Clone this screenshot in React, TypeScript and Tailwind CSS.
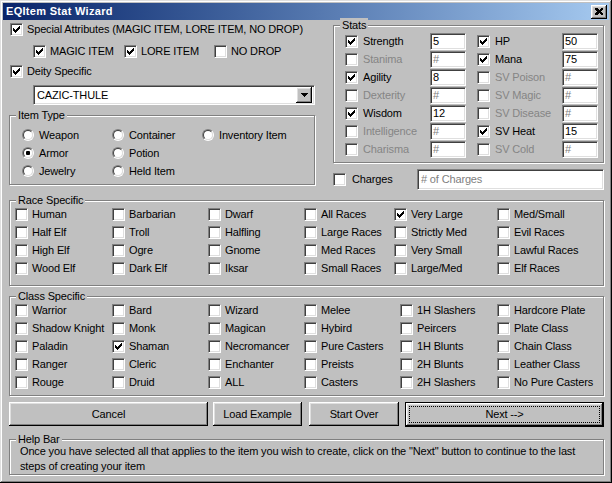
import React from 'react';

// classic win9x bevels
const sunken =
  'border border-t-[#808080] border-l-[#808080] border-r-white border-b-white shadow-[inset_1px_1px_0_#404040,inset_-1px_-1px_0_#dfdfdf]';
const raised =
  'shadow-[inset_-1px_-1px_0_#000,inset_1px_1px_0_#fff,inset_-2px_-2px_0_#808080,inset_2px_2px_0_#dfdfdf]';

const Check = () => (
  <svg width="9" height="9" viewBox="0 0 9 9" shapeRendering="crispEdges">
    <path
      d="M1 3h1v3h-1z M2 4h1v3h-1z M3 5h1v3h-1z M4 4h1v3h-1z M5 3h1v3h-1z M6 2h1v3h-1z M7 1h1v3h-1z"
      fill="#000"
    />
  </svg>
);

const Checkbox = ({ checked = false }: { checked?: boolean }) => (
  <div className={`w-[13px] h-[13px] shrink-0 bg-white flex items-center justify-center ${sunken}`}>
    {checked && <Check />}
  </div>
);

const CheckLabel = ({
  label,
  checked = false,
  disabled = false,
  gap = 'ml-[4px]',
}: {
  label: string;
  checked?: boolean;
  disabled?: boolean;
  gap?: string;
}) => (
  <div className="flex items-center h-[18px] whitespace-nowrap">
    <Checkbox checked={checked} />
    <span className={`${gap} ${disabled ? 'text-[#858585]' : 'text-black'}`}>{label}</span>
  </div>
);

const Radio = ({ label, selected = false }: { label: string; selected?: boolean }) => (
  <div className="flex items-center h-[18px] whitespace-nowrap">
    <div className="w-[12px] h-[12px] shrink-0 rounded-full border border-t-[#808080] border-l-[#808080] border-r-white border-b-white">
      <div className="w-full h-full rounded-full border border-t-[#404040] border-l-[#404040] border-r-[#dfdfdf] border-b-[#dfdfdf] bg-white flex items-center justify-center">
        {selected && <div className="w-[4px] h-[4px] rounded-[1px] bg-black" />}
      </div>
    </div>
    <span className="ml-[5px]">{label}</span>
  </div>
);

const Group = ({
  label,
  className,
  children,
}: {
  label: string;
  className: string;
  children: React.ReactNode;
}) => (
  <div className={`relative border border-[#808080] shadow-[inset_1px_1px_0_#fff,1px_1px_0_#fff] ${className}`}>
    <span className="absolute -top-[8px] left-[6px] px-[2px] bg-[#c0c0c0] leading-[14px]">{label}</span>
    {children}
  </div>
);

const Field = ({ value, placeholder = '#', width }: { value?: string; placeholder?: string; width: string }) => (
  <div className={`${width} h-[17px] shrink-0 bg-white flex items-center pl-[2px] ${sunken}`}>
    {value ? <span>{value}</span> : <span className="text-[#808080]">{placeholder}</span>}
  </div>
);

const stats: [string, boolean, string, string, boolean, string][] = [
  ['Strength', true, '5', 'HP', true, '50'],
  ['Stanima', false, '', 'Mana', true, '75'],
  ['Agility', true, '8', 'SV Poison', false, ''],
  ['Dexterity', false, '', 'SV Magic', false, ''],
  ['Wisdom', true, '12', 'SV Disease', false, ''],
  ['Intelligence', false, '', 'SV Heat', true, '15'],
  ['Charisma', false, '', 'SV Cold', false, ''],
];

const races = [
  ['Human', 'Barbarian', 'Dwarf', 'All Races', 'Very Large', 'Med/Small'],
  ['Half Elf', 'Troll', 'Halfling', 'Large Races', 'Strictly Med', 'Evil Races'],
  ['High Elf', 'Ogre', 'Gnome', 'Med Races', 'Very Small', 'Lawful Races'],
  ['Wood Elf', 'Dark Elf', 'Iksar', 'Small Races', 'Large/Med', 'Elf Races'],
];

const classes = [
  ['Warrior', 'Bard', 'Wizard', 'Melee', '1H Slashers', 'Hardcore Plate'],
  ['Shadow Knight', 'Monk', 'Magican', 'Hybird', 'Peircers', 'Plate Class'],
  ['Paladin', 'Shaman', 'Necromancer', 'Pure Casters', '1H Blunts', 'Chain Class'],
  ['Ranger', 'Cleric', 'Enchanter', 'Preists', '2H Blunts', 'Leather Class'],
  ['Rouge', 'Druid', 'ALL', 'Casters', '2H Slashers', 'No Pure Casters'],
];

export default function App() {
  return (
    <div className="w-[612px] h-[483px] bg-[#c0c0c0] p-[3px] flex flex-col text-[11px] leading-[13px] tracking-[-0.15px] text-black font-['Liberation_Sans',Arial,sans-serif] shadow-[inset_-1px_-1px_0_#000,inset_1px_1px_0_#dfdfdf,inset_-2px_-2px_0_#808080,inset_2px_2px_0_#fff]">
      {/* Title bar */}
      <div className="h-[17px] flex items-center justify-between pl-[3px] pr-[2px] bg-linear-to-r from-[#0a246a] to-[#a6caf0]">
        <span className="text-white font-bold text-[11px] tracking-[0.3px]">EQItem Stat Wizard</span>
        <div className={`w-[16px] h-[14px] bg-[#c0c0c0] flex items-center justify-center ${raised}`}>
          <svg width="8" height="7" viewBox="0 0 8 7" shapeRendering="crispEdges">
            <path d="M0 0h2l2 2 2-2h2v1l-2 2.5 2 2.5v1h-2l-2-2-2 2h-2v-1l2-2.5-2-2.5z" fill="#000" />
          </svg>
        </div>
      </div>

      {/* Top section */}
      <div className="flex">
        <div className="w-[306px] ml-[6px] flex flex-col">
          <div className="pl-[1px]">
            <CheckLabel label="Special Attributes (MAGIC ITEM, LORE ITEM, NO DROP)" checked />
          </div>
          <div className="mt-[4px] pl-[24px] flex">
            <div className="w-[91px]">
              <CheckLabel label="MAGIC ITEM" checked />
            </div>
            <div className="w-[90px]">
              <CheckLabel label="LORE ITEM" checked />
            </div>
            <CheckLabel label="NO DROP" />
          </div>
          <div className="mt-[2px] pl-[1px]">
            <CheckLabel label="Deity Specific" checked />
          </div>
          <div className={`mt-[5px] ml-[24px] w-[282px] h-[20px] bg-white flex items-center justify-between pl-[3px] pr-[2px] ${sunken}`}>
            <span>CAZIC-THULE</span>
            <div className={`w-[16px] h-[16px] bg-[#c0c0c0] flex items-center justify-center ${raised}`}>
              <svg width="7" height="4" viewBox="0 0 7 4" shapeRendering="crispEdges">
                <path d="M0 0h7v1h-1v1h-1v1h-1v1h-1v-1h-1v-1h-1v-1h-1z" fill="#000" />
              </svg>
            </div>
          </div>
          <Group label="Item Type" className="mt-[10px] h-[70px] pt-[10px] pl-[12px]">
            <div className="grid grid-cols-[90px_90px_90px]">
              <Radio label="Weapon" />
              <Radio label="Container" />
              <Radio label="Inventory Item" />
              <Radio label="Armor" selected />
              <Radio label="Potion" />
              <div />
              <Radio label="Jewelry" />
              <Radio label="Held Item" />
            </div>
          </Group>
        </div>

        <div className="w-[271px] ml-[18px] flex flex-col">
          <Group label="Stats" className="mt-[5px] h-[138px] pt-[6px] pl-[11px]">
            {stats.map(([a, ac, av, b, bc, bv]) => (
              <div key={a} className="flex items-center h-[18px]">
                <div className="w-[85px]">
                  <CheckLabel label={a} checked={ac} disabled={!ac} gap="ml-[5px]" />
                </div>
                <Field value={av} width="w-[36px]" />
                <div className="w-[85px] ml-[11px]">
                  <CheckLabel label={b} checked={bc} disabled={!bc} gap="ml-[5px]" />
                </div>
                <Field value={bv} width="w-[36px]" />
              </div>
            ))}
          </Group>
          <div className="mt-[6px] h-[21px] flex items-center">
            <div className="w-[84px]">
              <CheckLabel label="Charges" gap="ml-[6px]" />
            </div>
            <div className={`w-[187px] h-[21px] bg-white flex items-center pl-[3px] text-[#808080] ${sunken}`}>
              # of Charges
            </div>
          </div>
        </div>
      </div>

      {/* Race Specific */}
      <Group label="Race Specific" className="mt-[10px] ml-[6px] w-[595px] h-[86px] pt-[4px] pl-[5px]">
        <div className="grid grid-cols-[97px_96px_96px_90px_103px_1fr]">
          {races.flat().map((r) => (
            <CheckLabel key={r} label={r} checked={r === 'Very Large'} />
          ))}
        </div>
      </Group>

      {/* Class Specific */}
      <Group label="Class Specific" className="mt-[10px] ml-[6px] w-[595px] h-[100px] pt-[4px] pl-[5px]">
        <div className="grid grid-cols-[97px_96px_96px_96px_97px_1fr]">
          {classes.flat().map((c) => (
            <CheckLabel key={c} label={c} checked={c === 'Shaman'} />
          ))}
        </div>
      </Group>

      {/* Buttons */}
      <div className="mt-[6px] ml-[6px] flex items-start">
        <button className={`w-[199px] h-[24px] bg-[#c0c0c0] ${raised}`}>Cancel</button>
        <button className={`ml-[5px] w-[89px] h-[24px] bg-[#c0c0c0] ${raised}`}>Load Example</button>
        <button className={`ml-[7px] w-[90px] h-[24px] bg-[#c0c0c0] ${raised}`}>Start Over</button>
        <button className="ml-[6px] w-[199px] h-[25px] border border-black bg-[#c0c0c0] p-0">
          <div className={`w-full h-full p-[3px] ${raised}`}>
            <div className="w-full h-full border border-dotted border-black flex items-center justify-center">
              Next --&gt;
            </div>
          </div>
        </button>
      </div>

      {/* Help bar */}
      <Group label="Help Bar" className="mt-[12px] ml-[6px] w-[595px] h-[36px] pt-[4px] pl-[10px] leading-[15px]">
        <p>
          Once you have selected all that applies to the item you wish to create, click on the "Next" button to continue to the last
          steps of creating your item
        </p>
      </Group>
    </div>
  );
}
